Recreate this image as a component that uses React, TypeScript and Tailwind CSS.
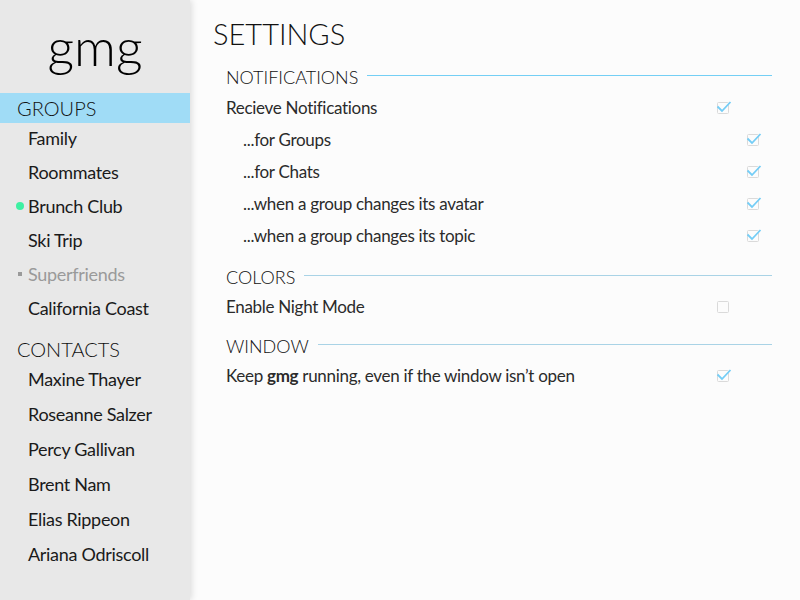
import React from 'react'

const groups = [
  { name: 'Family' },
  { name: 'Roommates' },
  { name: 'Brunch Club', status: 'online' },
  { name: 'Ski Trip' },
  { name: 'Superfriends', status: 'muted' },
  { name: 'California Coast' },
]

const contacts = ['Maxine Thayer', 'Roseanne Salzer', 'Percy Gallivan', 'Brent Nam', 'Elias Rippeon', 'Ariana Odriscoll']

function Checkbox({ checked }: { checked: boolean }) {
  return (
    <svg width="16" height="16" viewBox="0 0 16 16" className="block">
      <rect x="1.5" y="3.5" width="11" height="11" rx="1" fill="none" stroke="#dadada" strokeWidth="1" />
      {checked && <path d="M1.5 7.5 L6 12 L14.5 3" fill="none" stroke="#74cdf6" strokeWidth="1.8" />}
    </svg>
  )
}

function SectionHeading({ title, lineColor }: { title: string; lineColor: string }) {
  return (
    <div className="flex h-[26px] items-center gap-[9px]">
      <span className="text-[18px] font-light text-[#111] leading-none">{title}</span>
      <div className={`mb-[4px] h-px flex-1 ${lineColor}`} />
    </div>
  )
}

function SettingRow({ label, checked, sub }: { label: React.ReactNode; checked: boolean; sub?: boolean }) {
  return (
    <div className={`flex h-[32px] items-center justify-between ${sub ? 'pl-[17px] pr-[10px]' : 'pr-[40px]'}`}>
      <span className="text-[17px] text-[#2b2b2b] tracking-[-0.3px]">{label}</span>
      <div className="-mt-[3px]">
        <Checkbox checked={checked} />
      </div>
    </div>
  )
}

export default function App() {
  return (
    <div className="flex h-screen w-full bg-[#fcfcfc]" style={{ fontFamily: 'Lato, "Noto Sans", sans-serif' }}>
      <aside className="relative z-10 flex w-[190px] shrink-0 flex-col bg-[#e8e8e8] shadow-[2px_0_6px_rgba(0,0,0,0.12)]">
        <div className="flex h-[93px] items-center justify-center pb-[2px]">
          <span className="text-[52px] font-light leading-none text-black">gmg</span>
        </div>
        <div className="flex h-[30px] items-center bg-[#a0dcf6] pl-[17px] text-[20px] font-light text-[#111]">GROUPS</div>
        <ul className="-mt-[2px]">
          {groups.map((g) => (
            <li key={g.name} className="relative flex h-[34px] items-center pl-[28px] text-[18px] tracking-[-0.3px]">
              {g.status === 'online' && <span className="absolute left-[16px] h-[8px] w-[8px] rounded-full bg-[#3ef0a2]" />}
              {g.status === 'muted' && <span className="absolute left-[18px] h-[4px] w-[4px] bg-[#9a9a9a]" />}
              <span className={g.status === 'muted' ? 'text-[#9a9a9a]' : 'text-[#1a1a1a]'}>{g.name}</span>
            </li>
          ))}
        </ul>
        <div className="mt-[9px] flex h-[30px] items-center pl-[17px] text-[20px] font-light text-[#111]">CONTACTS</div>
        <ul className="-mt-[2px]">
          {contacts.map((c) => (
            <li key={c} className="flex h-[35px] items-center pl-[28px] text-[18px] tracking-[-0.3px] text-[#1a1a1a]">
              {c}
            </li>
          ))}
        </ul>
      </aside>

      <main className="flex flex-1 flex-col pl-[23px] pr-[28px]">
        <h1 className="mt-[16px] h-[36px] text-[29px] font-light leading-[36px] text-[#111]">SETTINGS</h1>
        <div className="mt-[12px] pl-[13px]">
          <SectionHeading title="NOTIFICATIONS" lineColor="bg-[#74cff5]" />
          <div className="mt-[2px]">
            <SettingRow label="Recieve Notifications" checked />
            <SettingRow label="...for Groups" checked sub />
            <SettingRow label="...for Chats" checked sub />
            <SettingRow label="...when a group changes its avatar" checked sub />
            <SettingRow label="...when a group changes its topic" checked sub />
          </div>

          <div className="mt-[12px]">
            <SectionHeading title="COLORS" lineColor="bg-[#a9d3e6]" />
          </div>
          <div className="mt-px">
            <SettingRow label="Enable Night Mode" checked={false} />
          </div>

          <div className="mt-[10px]">
            <SectionHeading title="WINDOW" lineColor="bg-[#a9d3e6]" />
          </div>
          <div className="mt-px">
            <SettingRow
              label={
                <>
                  Keep <span className="font-bold">gmg</span> running, even if the window isn’t open
                </>
              }
              checked
            />
          </div>
        </div>
      </main>
    </div>
  )
}
